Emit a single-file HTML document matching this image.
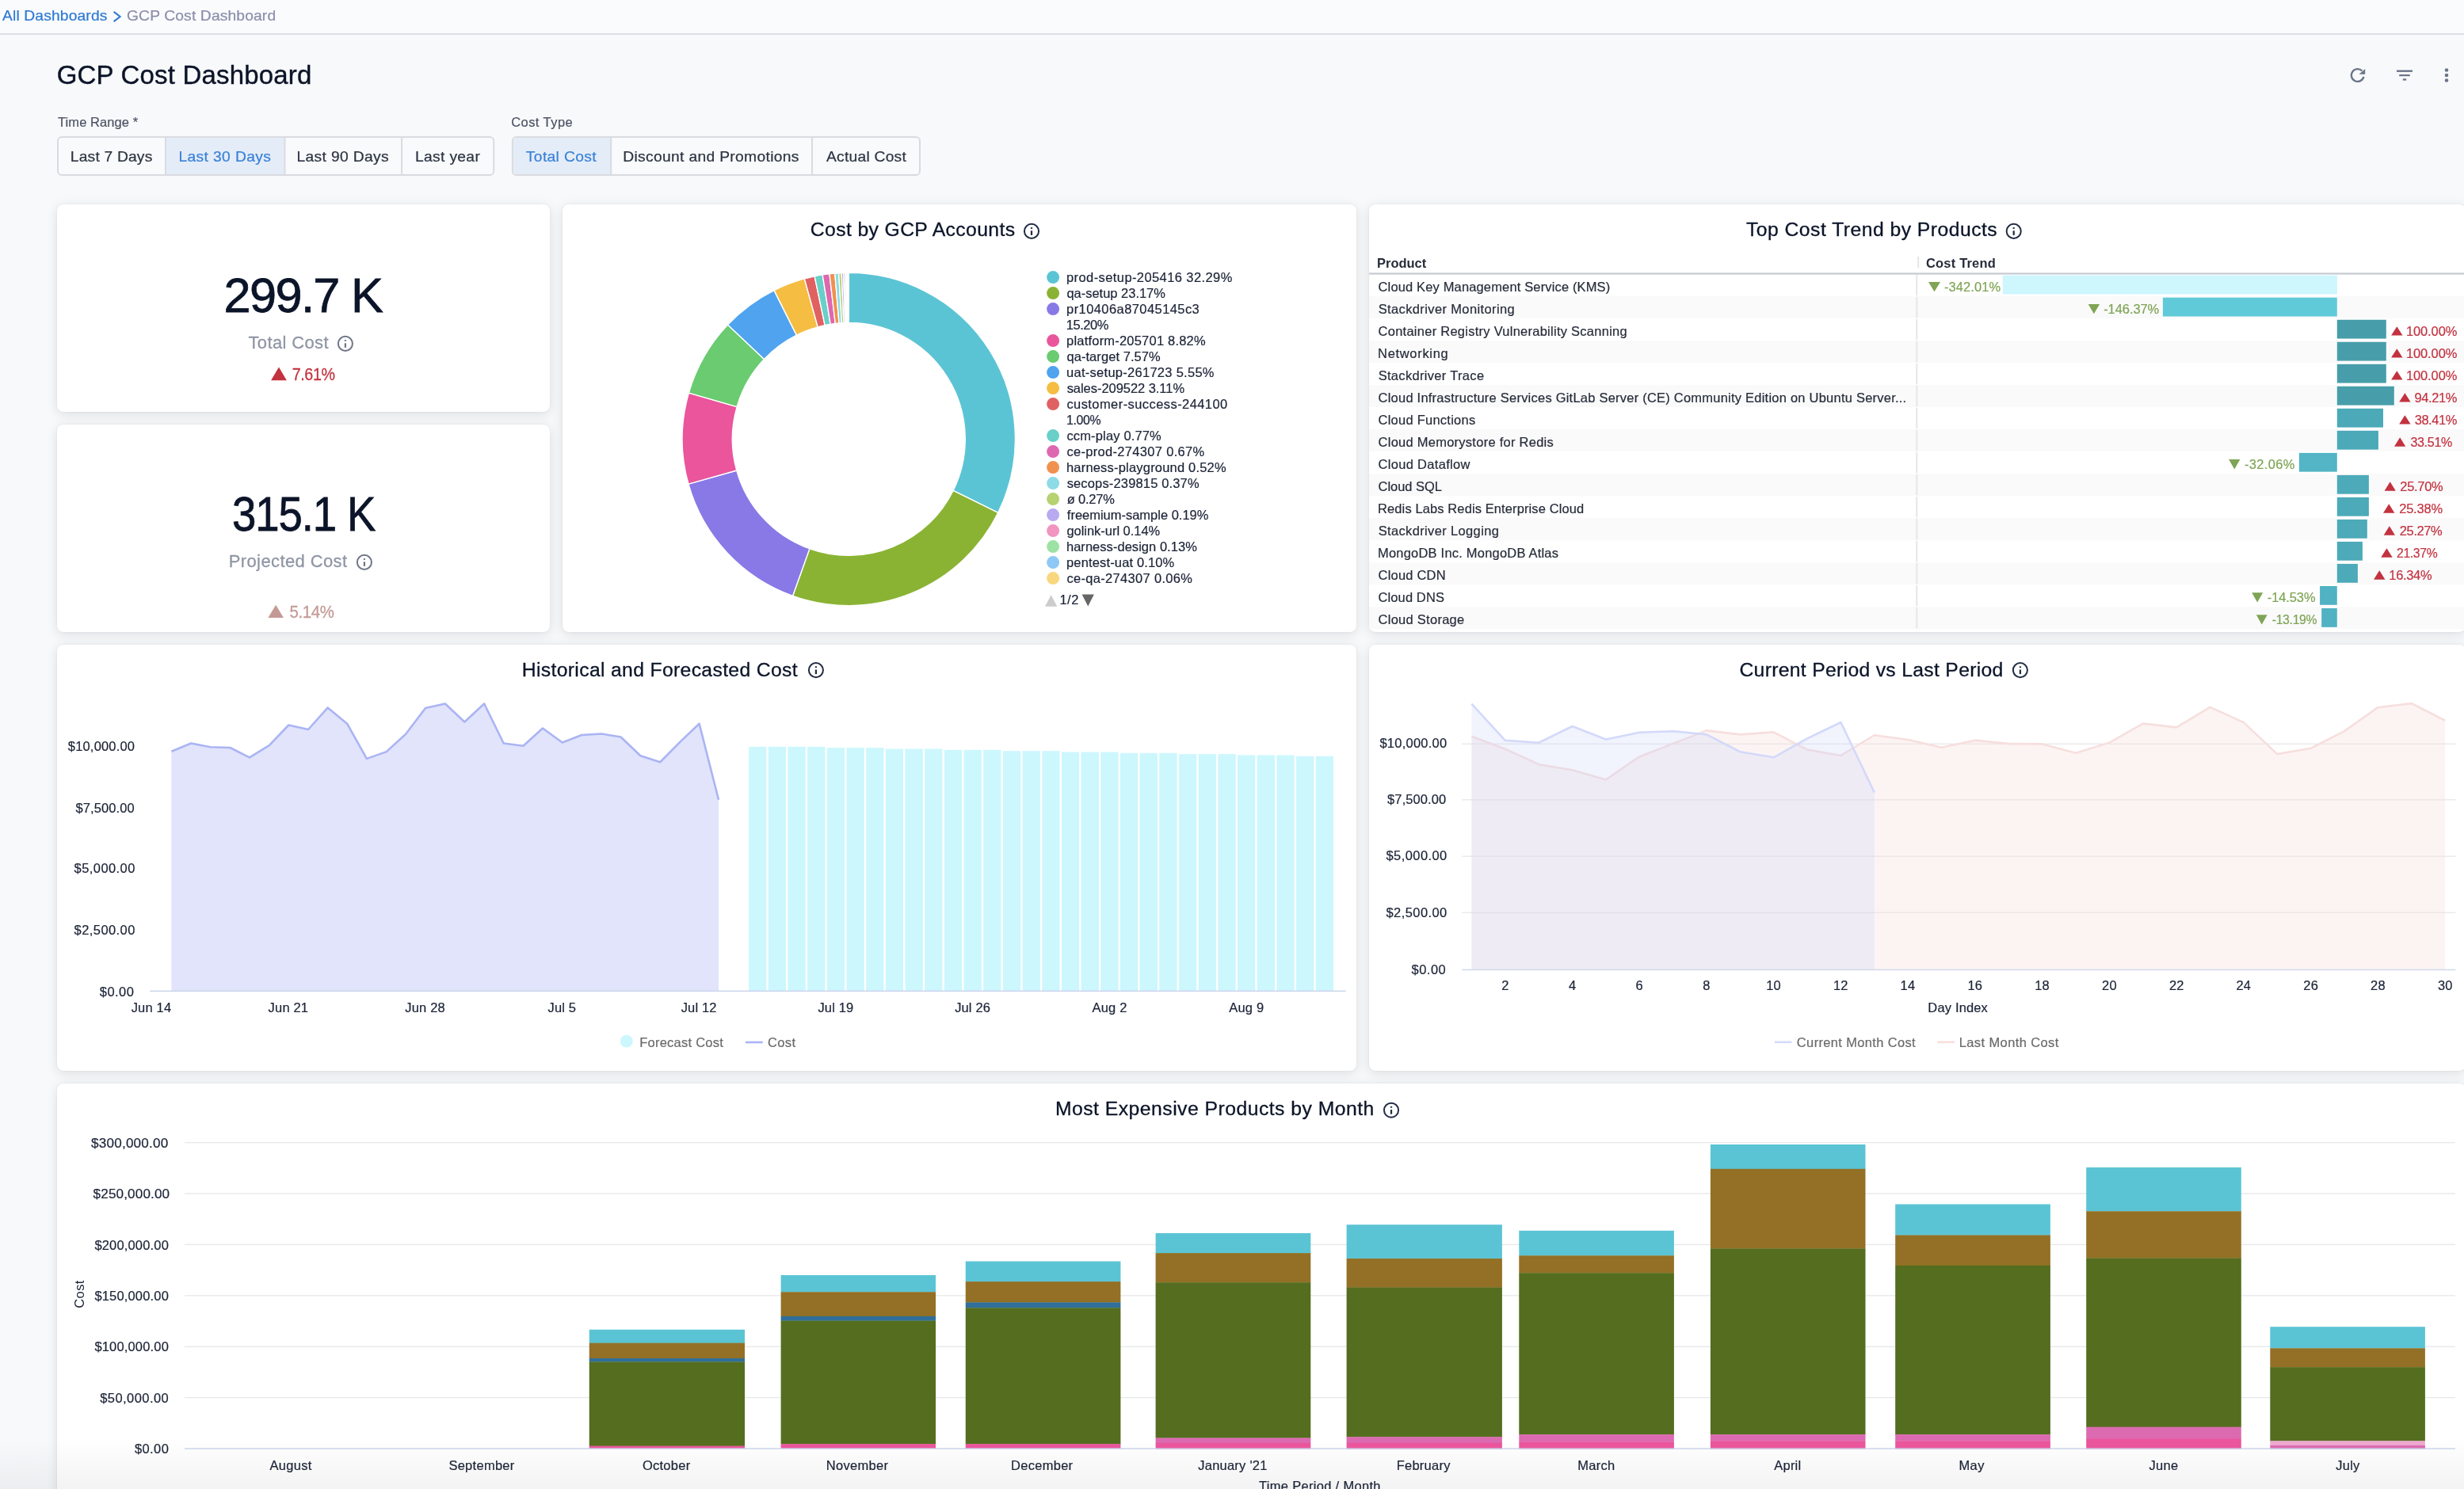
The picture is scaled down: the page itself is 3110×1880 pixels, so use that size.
<!DOCTYPE html><html lang="en"><head><meta charset="utf-8"><title>GCP Cost Dashboard</title><style>
html,body{margin:0;padding:0}body{width:3110px;height:1880px;overflow:hidden;background:#f8f9fb;position:relative;font-family:"Liberation Sans",sans-serif}
.card{position:absolute;background:#fff;border-radius:8px;box-shadow:0 3px 15px rgba(12,12,18,.115),0 0 2px rgba(12,12,18,.08)}
svg{position:absolute;left:0;top:0;will-change:transform}svg text{font-family:"Liberation Sans",sans-serif;white-space:pre}
.fade{position:absolute;left:0;top:1816px;width:3110px;height:64px;background:linear-gradient(to bottom,rgba(20,20,28,0),rgba(20,20,28,.052))}
</style></head><body>
<div class="card" style="left:72px;top:258px;width:622px;height:262px"></div>
<div class="card" style="left:72px;top:536px;width:622px;height:262px"></div>
<div class="card" style="left:710px;top:258px;width:1002px;height:540px"></div>
<div class="card" style="left:1728px;top:258px;width:1384px;height:540px"></div>
<div class="card" style="left:72px;top:814px;width:1640px;height:538.3px"></div>
<div class="card" style="left:1728px;top:814px;width:1384px;height:538.3px"></div>
<div class="card" style="left:72px;top:1368px;width:3040px;height:560px"></div>
<div class="fade"></div>
<svg width="3110" height="1880" viewBox="0 0 3110 1880">
<rect x="0" y="0" width="3110" height="42.2" fill="#fafbfd"/>
<text x="3.06" y="26.1" font-size="19.23" letter-spacing="0.15" fill="#2f7ad3" stroke="#2f7ad3" stroke-width="0.24">All Dashboards</text>
<path d="M143.6 14.8L151.6 21L143.6 27.2" fill="none" stroke="#2f7ad3" stroke-width="2.1"/>
<text x="160.03" y="26.1" font-size="19.23" letter-spacing="0.15" fill="#8b8fab" stroke="#8b8fab" stroke-width="0.24">GCP Cost Dashboard</text>
<rect x="0" y="42.15" width="3110" height="1.6" fill="#d5d6e3"/>
<text x="71.64" y="106" font-size="32.96" letter-spacing="0.21" fill="#0b1428" stroke="#0b1428" stroke-width="0.41">GCP Cost Dashboard</text>
<path d="M2981.3 89.4A7.9 7.9 0 1 0 2983.4 96.9" fill="none" stroke="#6b7489" stroke-width="2.3"/>
<path d="M2985.2 86.9L2985.2 93.8L2977.5 93.8Z" fill="#6b7489"/>
<rect x="3025" y="88.5" width="20" height="2.4" fill="#6b7489"/>
<rect x="3028.2" y="94" width="13.5" height="2.2" fill="#6b7489"/>
<rect x="3032.8" y="99.3" width="4.4" height="2.3" fill="#6b7489"/>
<circle cx="3088" cy="88.5" r="2.3" fill="#6b7489"/>
<circle cx="3088" cy="95" r="2.3" fill="#6b7489"/>
<circle cx="3088" cy="101.5" r="2.3" fill="#6b7489"/>
<text x="73.03" y="160.2" font-size="16.48" letter-spacing="0.1" fill="#4b5262" stroke="#4b5262" stroke-width="0.21">Time Range *</text>
<text x="645.16" y="160.2" font-size="16.48" letter-spacing="0.46" fill="#4b5262" stroke="#4b5262" stroke-width="0.21">Cost Type</text>
<rect x="73" y="172.9" width="550.2" height="48.1" rx="5" fill="#f9fafb" stroke="#d9dbe0" stroke-width="2"/>
<rect x="209" y="173.9" width="150.5" height="46.1" fill="#e4ecf7"/>
<rect x="208" y="173.9" width="2" height="46.1" fill="#d9dbe0"/>
<rect x="358.5" y="173.9" width="2" height="46.1" fill="#d9dbe0"/>
<rect x="506.1" y="173.9" width="2" height="46.1" fill="#d9dbe0"/>
<text x="88.82" y="203.8" font-size="19.23" letter-spacing="0.2" fill="#2c3442" stroke="#2c3442" stroke-width="0.24">Last 7 Days</text>
<text x="225.42" y="203.8" font-size="19.23" letter-spacing="0.39" fill="#3a82d8" stroke="#3a82d8" stroke-width="0.24">Last 30 Days</text>
<text x="374.42" y="203.8" font-size="19.23" letter-spacing="0.37" fill="#2c3442" stroke="#2c3442" stroke-width="0.24">Last 90 Days</text>
<text x="524.02" y="203.8" font-size="19.23" letter-spacing="0.34" fill="#2c3442" stroke="#2c3442" stroke-width="0.24">Last year</text>
<rect x="646.9" y="172.9" width="514.1" height="48.1" rx="5" fill="#f9fafb" stroke="#d9dbe0" stroke-width="2"/>
<path d="M652.9 173.9H771.2V220H652.9A5 5 0 0 1 647.9 215V178.9A5 5 0 0 1 652.9 173.9Z" fill="#e4ecf7"/>
<rect x="770.2" y="173.9" width="2" height="46.1" fill="#d9dbe0"/>
<rect x="1024" y="173.9" width="2" height="46.1" fill="#d9dbe0"/>
<text x="663.87" y="203.8" font-size="19.23" letter-spacing="0.36" fill="#3a82d8" stroke="#3a82d8" stroke-width="0.24">Total Cost</text>
<text x="786.22" y="203.8" font-size="19.23" letter-spacing="0.34" fill="#2c3442" stroke="#2c3442" stroke-width="0.24">Discount and Promotions</text>
<text x="1042.96" y="203.8" font-size="19.23" letter-spacing="0.26" fill="#2c3442" stroke="#2c3442" stroke-width="0.24">Actual Cost</text>
<text x="282.62" y="393.5" font-size="61.29" letter-spacing="-1.65" fill="#0b1428" stroke="#0b1428" stroke-width="0.77">299.7 K</text>
<text x="313.51" y="439.7" font-size="21.97" letter-spacing="0.37" fill="#8e95a4" stroke="#8e95a4" stroke-width="0.27">Total Cost</text>
<g fill="#6f7788"><circle cx="435.9" cy="433.9" r="9.05" fill="none" stroke="#6f7788" stroke-width="2"/><rect x="434.78" y="433.3" width="2.25" height="5.6"/><rect x="434.78" y="429.1" width="2.25" height="1.8"/></g>
<path d="M342.1 480.2L361.8 480.2L351.95 463.6Z" fill="#c2323f"/>
<text transform="translate(368.69 479.8) scale(0.8972 1)" font-size="21.97" letter-spacing="-0.44" fill="#c2323f" stroke="#c2323f" stroke-width="0.27">7.61%</text>
<text transform="translate(292.97 670.1) scale(0.8905 1)" font-size="61.29" letter-spacing="-1.23" fill="#0b1428" stroke="#0b1428" stroke-width="0.77">315.1 K</text>
<text x="288.7" y="715.5" font-size="21.97" letter-spacing="0.41" fill="#8e95a4" stroke="#8e95a4" stroke-width="0.27">Projected Cost</text>
<g fill="#6f7788"><circle cx="459.9" cy="709.9" r="9.05" fill="none" stroke="#6f7788" stroke-width="2"/><rect x="458.78" y="709.3" width="2.25" height="5.6"/><rect x="458.78" y="705.1" width="2.25" height="1.8"/></g>
<path d="M338.4 780L357.9 780L348.15 763.8Z" fill="#c49a96"/>
<text transform="translate(365.58 779.7) scale(0.9291 1)" font-size="21.97" letter-spacing="-0.44" fill="#c49a96" stroke="#c49a96" stroke-width="0.27">5.14%</text>
<text x="1022.84" y="297.5" font-size="24.72" letter-spacing="0.38" fill="#0b1428" stroke="#0b1428" stroke-width="0.31">Cost by GCP Accounts</text>
<g fill="#222d44"><circle cx="1302" cy="291.9" r="9.05" fill="none" stroke="#222d44" stroke-width="2"/><rect x="1300.88" y="291.3" width="2.25" height="5.6"/><rect x="1300.88" y="287.1" width="2.25" height="1.8"/></g>
<g stroke="#fff" stroke-width="1.4" stroke-linejoin="round"><path d="M1071.3 344.3A210.15 210.15 0 0 1 1259.79 647.38L1203.1 619.43A146.95 146.95 0 0 0 1071.3 407.5Z" fill="#5bc4d4"/><path d="M1259.79 647.38A210.15 210.15 0 0 1 1000.61 752.35L1021.87 692.84A146.95 146.95 0 0 0 1203.1 619.43Z" fill="#8ab334"/><path d="M1000.61 752.35A210.15 210.15 0 0 1 868.92 611.05L929.78 594.03A146.95 146.95 0 0 0 1021.87 692.84Z" fill="#8879e6"/><path d="M868.92 611.05A210.15 210.15 0 0 1 869.42 496.07L930.13 513.63A146.95 146.95 0 0 0 929.78 594.03Z" fill="#ea559c"/><path d="M869.42 496.07A210.15 210.15 0 0 1 918.56 410.11L964.49 453.52A146.95 146.95 0 0 0 930.13 513.63Z" fill="#6acb71"/><path d="M918.56 410.11A210.15 210.15 0 0 1 977.07 366.61L1005.41 423.1A146.95 146.95 0 0 0 964.49 453.52Z" fill="#4fa3ef"/><path d="M977.07 366.61A210.15 210.15 0 0 1 1015.34 351.89L1032.17 412.81A146.95 146.95 0 0 0 1005.41 423.1Z" fill="#f5bd42"/><path d="M1015.34 351.89A210.15 210.15 0 0 1 1028.17 348.77L1041.14 410.63A146.95 146.95 0 0 0 1032.17 412.81Z" fill="#e06162"/><path d="M1028.17 348.77A210.15 210.15 0 0 1 1038.16 346.93L1048.13 409.34A146.95 146.95 0 0 0 1041.14 410.63Z" fill="#68d0c8"/><path d="M1038.16 346.93A210.15 210.15 0 0 1 1046.93 345.72L1054.26 408.49A146.95 146.95 0 0 0 1048.13 409.34Z" fill="#de68b0"/><path d="M1046.93 345.72A210.15 210.15 0 0 1 1053.76 345.03L1059.03 408.01A146.95 146.95 0 0 0 1054.26 408.49Z" fill="#f09150"/><path d="M1053.76 345.03A210.15 210.15 0 0 1 1058.63 344.68L1062.44 407.77A146.95 146.95 0 0 0 1059.03 408.01Z" fill="#8cdbe6"/><path d="M1058.63 344.68A210.15 210.15 0 0 1 1062.19 344.5L1064.93 407.64A146.95 146.95 0 0 0 1062.44 407.77Z" fill="#b6d271"/><path d="M1062.19 344.5A210.15 210.15 0 0 1 1064.7 344.4L1066.68 407.57A146.95 146.95 0 0 0 1064.93 407.64Z" fill="#b7aaf0"/><path d="M1064.7 344.4A210.15 210.15 0 0 1 1066.55 344.35L1067.98 407.54A146.95 146.95 0 0 0 1066.68 407.57Z" fill="#f194c0"/><path d="M1066.55 344.35A210.15 210.15 0 0 1 1068.26 344.32L1069.18 407.52A146.95 146.95 0 0 0 1067.98 407.54Z" fill="#9de2a5"/><path d="M1068.26 344.32A210.15 210.15 0 0 1 1069.58 344.31L1070.1 407.5A146.95 146.95 0 0 0 1069.18 407.52Z" fill="#8ec8f6"/><path d="M1069.58 344.31A210.15 210.15 0 0 1 1070.38 344.3L1070.65 407.5A146.95 146.95 0 0 0 1070.1 407.5Z" fill="#f9d77e"/><path d="M1070.38 344.3A210.15 210.15 0 0 1 1070.9 344.3L1071.02 407.5A146.95 146.95 0 0 0 1070.65 407.5Z" fill="#f19a9b"/><path d="M1070.9 344.3A210.15 210.15 0 0 1 1071.3 344.3L1071.3 407.5A146.95 146.95 0 0 0 1071.02 407.5Z" fill="#a6e5df"/></g>
<circle cx="1329.1" cy="350.1" r="8" fill="#5bc4d4"/>
<text x="1346.04" y="356.2" font-size="16.48" letter-spacing="0.42" fill="#1b2336" stroke="#1b2336" stroke-width="0.21">prod-setup-205416 32.29%</text>
<circle cx="1329.1" cy="370.1" r="8" fill="#8ab334"/>
<text x="1346.41" y="376.2" font-size="16.48" letter-spacing="0" fill="#1b2336" stroke="#1b2336" stroke-width="0.21">qa-setup 23.17%</text>
<circle cx="1329.1" cy="390.1" r="8" fill="#8879e6"/>
<text x="1346.04" y="396.2" font-size="16.48" letter-spacing="0.44" fill="#1b2336" stroke="#1b2336" stroke-width="0.21">pr10406a87045145c3</text>
<text x="1345.84" y="416.2" font-size="16.48" letter-spacing="-0.45" fill="#1b2336" stroke="#1b2336" stroke-width="0.21">15.20%</text>
<circle cx="1329.1" cy="430.1" r="8" fill="#ea559c"/>
<text x="1346.04" y="436.2" font-size="16.48" letter-spacing="0.22" fill="#1b2336" stroke="#1b2336" stroke-width="0.21">platform-205701 8.82%</text>
<circle cx="1329.1" cy="450.1" r="8" fill="#6acb71"/>
<text x="1346.41" y="456.2" font-size="16.48" letter-spacing="0.08" fill="#1b2336" stroke="#1b2336" stroke-width="0.21">qa-target 7.57%</text>
<circle cx="1329.1" cy="470.1" r="8" fill="#4fa3ef"/>
<text x="1346.03" y="476.2" font-size="16.48" letter-spacing="0.29" fill="#1b2336" stroke="#1b2336" stroke-width="0.21">uat-setup-261723 5.55%</text>
<circle cx="1329.1" cy="490.1" r="8" fill="#f5bd42"/>
<text x="1346.64" y="496.2" font-size="16.48" letter-spacing="-0.03" fill="#1b2336" stroke="#1b2336" stroke-width="0.21">sales-209522 3.11%</text>
<circle cx="1329.1" cy="510.1" r="8" fill="#e06162"/>
<text x="1346.4" y="516.2" font-size="16.48" letter-spacing="0.44" fill="#1b2336" stroke="#1b2336" stroke-width="0.21">customer-success-244100</text>
<text transform="translate(1345.89 536.2) scale(0.9640 1)" font-size="16.48" letter-spacing="-0.33" fill="#1b2336" stroke="#1b2336" stroke-width="0.21">1.00%</text>
<circle cx="1329.1" cy="550.1" r="8" fill="#68d0c8"/>
<text x="1346.4" y="556.2" font-size="16.48" letter-spacing="0.17" fill="#1b2336" stroke="#1b2336" stroke-width="0.21">ccm-play 0.77%</text>
<circle cx="1329.1" cy="570.1" r="8" fill="#de68b0"/>
<text x="1346.4" y="576.2" font-size="16.48" letter-spacing="0.33" fill="#1b2336" stroke="#1b2336" stroke-width="0.21">ce-prod-274307 0.67%</text>
<circle cx="1329.1" cy="590.1" r="8" fill="#f09150"/>
<text x="1345.96" y="596.2" font-size="16.48" letter-spacing="0.21" fill="#1b2336" stroke="#1b2336" stroke-width="0.21">harness-playground 0.52%</text>
<circle cx="1329.1" cy="610.1" r="8" fill="#8cdbe6"/>
<text x="1346.64" y="616.2" font-size="16.48" letter-spacing="0.17" fill="#1b2336" stroke="#1b2336" stroke-width="0.21">secops-239815 0.37%</text>
<circle cx="1329.1" cy="630.1" r="8" fill="#b6d271"/>
<text x="1346.75" y="636.2" font-size="16.48" letter-spacing="-0.19" fill="#1b2336" stroke="#1b2336" stroke-width="0.21">ø 0.27%</text>
<circle cx="1329.1" cy="650.1" r="8" fill="#b7aaf0"/>
<text x="1346.87" y="656.2" font-size="16.48" letter-spacing="0" fill="#1b2336" stroke="#1b2336" stroke-width="0.21">freemium-sample 0.19%</text>
<circle cx="1329.1" cy="670.1" r="8" fill="#f194c0"/>
<text x="1346.41" y="676.2" font-size="16.48" letter-spacing="-0.02" fill="#1b2336" stroke="#1b2336" stroke-width="0.21">golink-url 0.14%</text>
<circle cx="1329.1" cy="690.1" r="8" fill="#9de2a5"/>
<text x="1345.96" y="696.2" font-size="16.48" letter-spacing="0.05" fill="#1b2336" stroke="#1b2336" stroke-width="0.21">harness-design 0.13%</text>
<circle cx="1329.1" cy="710.1" r="8" fill="#8ec8f6"/>
<text x="1346.04" y="716.2" font-size="16.48" letter-spacing="0.16" fill="#1b2336" stroke="#1b2336" stroke-width="0.21">pentest-uat 0.10%</text>
<circle cx="1329.1" cy="730.1" r="8" fill="#f9d77e"/>
<text x="1346.4" y="736.2" font-size="16.48" letter-spacing="0.33" fill="#1b2336" stroke="#1b2336" stroke-width="0.21">ce-qa-274307 0.06%</text>
<path d="M1319 765.7L1334.3 765.7L1326.65 751.2Z" fill="#cccccc"/>
<text x="1337.44" y="762.8" font-size="16.48" letter-spacing="0.49" fill="#1b2336" stroke="#1b2336" stroke-width="0.21">1/2</text>
<path d="M1365.6 750.4L1380.9 750.4L1373.25 765.4Z" fill="#666666"/>
<text x="2203.94" y="297.7" font-size="24.72" letter-spacing="0.47" fill="#0b1428" stroke="#0b1428" stroke-width="0.31">Top Cost Trend by Products</text>
<g fill="#222d44"><circle cx="2541.7" cy="291.9" r="9.05" fill="none" stroke="#222d44" stroke-width="2"/><rect x="2540.58" y="291.3" width="2.25" height="5.6"/><rect x="2540.58" y="287.1" width="2.25" height="1.8"/></g>
<text x="1738" y="338.3" font-size="16.48" letter-spacing="0.01" fill="#262c39" font-weight="700">Product</text>
<text x="2431.02" y="338.3" font-size="16.48" letter-spacing="0.19" fill="#262c39" font-weight="700">Cost Trend</text>
<rect x="2420.2" y="324" width="2" height="14" fill="#e3e5e9"/>
<rect x="2418.3" y="346.8" width="2" height="26.4" fill="#e4e6ea"/>
<text x="1739.56" y="367.7" font-size="16.48" letter-spacing="0.16" fill="#262c39" stroke="#262c39" stroke-width="0.21">Cloud Key Management Service (KMS)</text>
<rect x="2527.9" y="347.7" width="421.9" height="23.8" fill="#cdf6fd"/>
<path d="M2434 355.9L2449 355.9L2441.5 368.3Z" fill="#7fa455"/>
<text x="2453.97" y="367.7" font-size="16.48" letter-spacing="0.08" fill="#7fa455" stroke="#7fa455" stroke-width="0.21">-342.01%</text>
<rect x="1728" y="374.02" width="1400" height="28.02" fill="#fafafb"/>
<rect x="2418.3" y="374.82" width="2" height="26.4" fill="#e4e6ea"/>
<text x="1739.65" y="395.72" font-size="16.48" letter-spacing="0.39" fill="#262c39" stroke="#262c39" stroke-width="0.21">Stackdriver Monitoring</text>
<rect x="2729.9" y="375.72" width="219.9" height="23.8" fill="#61cad8"/>
<path d="M2635.7 383.92L2650.1 383.92L2642.9 396.32Z" fill="#7fa455"/>
<text x="2655.17" y="395.72" font-size="16.48" letter-spacing="-0.06" fill="#7fa455" stroke="#7fa455" stroke-width="0.21">-146.37%</text>
<rect x="2418.3" y="402.84" width="2" height="26.4" fill="#e4e6ea"/>
<text x="1739.56" y="423.74" font-size="16.48" letter-spacing="0.27" fill="#262c39" stroke="#262c39" stroke-width="0.21">Container Registry Vulnerability Scanning</text>
<rect x="2949.8" y="403.74" width="62" height="23.8" fill="#479eaa"/>
<path d="M3018.1 423.54L3032.5 423.54L3025.3 412.14Z" fill="#c2323f"/>
<text x="3036.94" y="423.74" font-size="16.48" letter-spacing="-0.1" fill="#c2323f" stroke="#c2323f" stroke-width="0.21">100.00%</text>
<rect x="1728" y="430.06" width="1400" height="28.02" fill="#fafafb"/>
<rect x="2418.3" y="430.86" width="2" height="26.4" fill="#e4e6ea"/>
<text x="1739.05" y="451.76" font-size="16.48" letter-spacing="0.7" fill="#262c39" stroke="#262c39" stroke-width="0.21">Networking</text>
<rect x="2949.8" y="431.76" width="62" height="23.8" fill="#479eaa"/>
<path d="M3018.1 451.56L3032.5 451.56L3025.3 440.16Z" fill="#c2323f"/>
<text x="3036.94" y="451.76" font-size="16.48" letter-spacing="-0.1" fill="#c2323f" stroke="#c2323f" stroke-width="0.21">100.00%</text>
<rect x="2418.3" y="458.88" width="2" height="26.4" fill="#e4e6ea"/>
<text x="1739.65" y="479.78" font-size="16.48" letter-spacing="0.33" fill="#262c39" stroke="#262c39" stroke-width="0.21">Stackdriver Trace</text>
<rect x="2949.8" y="459.78" width="62" height="23.8" fill="#479eaa"/>
<path d="M3018.1 479.58L3032.5 479.58L3025.3 468.18Z" fill="#c2323f"/>
<text x="3036.94" y="479.78" font-size="16.48" letter-spacing="-0.1" fill="#c2323f" stroke="#c2323f" stroke-width="0.21">100.00%</text>
<rect x="1728" y="486.1" width="1400" height="28.02" fill="#fafafb"/>
<rect x="2418.3" y="486.9" width="2" height="26.4" fill="#e4e6ea"/>
<text x="1739.56" y="507.8" font-size="16.48" letter-spacing="0.24" fill="#262c39" stroke="#262c39" stroke-width="0.21">Cloud Infrastructure Services GitLab Server (CE) Community Edition on Ubuntu Server...</text>
<rect x="2949.8" y="487.8" width="72" height="23.8" fill="#479eaa"/>
<path d="M3028.2 507.6L3042.6 507.6L3035.4 496.2Z" fill="#c2323f"/>
<text x="3047.53" y="507.8" font-size="16.48" letter-spacing="-0.41" fill="#c2323f" stroke="#c2323f" stroke-width="0.21">94.21%</text>
<rect x="2418.3" y="514.92" width="2" height="26.4" fill="#e4e6ea"/>
<text x="1739.56" y="535.82" font-size="16.48" letter-spacing="0.26" fill="#262c39" stroke="#262c39" stroke-width="0.21">Cloud Functions</text>
<rect x="2949.8" y="515.82" width="58.2" height="23.8" fill="#4ba9b8"/>
<path d="M3028.2 535.62L3042.6 535.62L3035.4 524.22Z" fill="#c2323f"/>
<text x="3047.67" y="535.82" font-size="16.48" letter-spacing="-0.44" fill="#c2323f" stroke="#c2323f" stroke-width="0.21">38.41%</text>
<rect x="1728" y="542.14" width="1400" height="28.02" fill="#fafafb"/>
<rect x="2418.3" y="542.94" width="2" height="26.4" fill="#e4e6ea"/>
<text x="1739.56" y="563.84" font-size="16.48" letter-spacing="0.27" fill="#262c39" stroke="#262c39" stroke-width="0.21">Cloud Memorystore for Redis</text>
<rect x="2949.8" y="543.84" width="52.1" height="23.8" fill="#4ba9b8"/>
<path d="M3022 563.64L3036.3 563.64L3029.15 552.24Z" fill="#c2323f"/>
<text transform="translate(3042.39 563.84) scale(0.9768 1)" font-size="16.48" letter-spacing="-0.33" fill="#c2323f" stroke="#c2323f" stroke-width="0.21">33.51%</text>
<rect x="2418.3" y="570.96" width="2" height="26.4" fill="#e4e6ea"/>
<text x="1739.56" y="591.86" font-size="16.48" letter-spacing="0.32" fill="#262c39" stroke="#262c39" stroke-width="0.21">Cloud Dataflow</text>
<rect x="2901.9" y="571.86" width="47.9" height="23.8" fill="#53b5c5"/>
<path d="M2813.2 580.06L2827.3 580.06L2820.25 592.46Z" fill="#7fa455"/>
<text x="2833.07" y="591.86" font-size="16.48" letter-spacing="0.32" fill="#7fa455" stroke="#7fa455" stroke-width="0.21">-32.06%</text>
<rect x="1728" y="598.18" width="1400" height="28.02" fill="#fafafb"/>
<rect x="2418.3" y="598.98" width="2" height="26.4" fill="#e4e6ea"/>
<text x="1739.56" y="619.88" font-size="16.48" letter-spacing="-0.03" fill="#262c39" stroke="#262c39" stroke-width="0.21">Cloud SQL</text>
<rect x="2949.8" y="599.88" width="40.1" height="23.8" fill="#4caab9"/>
<path d="M3009.6 619.68L3023.8 619.68L3016.7 608.28Z" fill="#c2323f"/>
<text x="3029.37" y="619.88" font-size="16.48" letter-spacing="-0.32" fill="#c2323f" stroke="#c2323f" stroke-width="0.21">25.70%</text>
<rect x="2418.3" y="627" width="2" height="26.4" fill="#e4e6ea"/>
<text x="1739.05" y="647.9" font-size="16.48" letter-spacing="0.12" fill="#262c39" stroke="#262c39" stroke-width="0.21">Redis Labs Redis Enterprise Cloud</text>
<rect x="2949.8" y="627.9" width="40.1" height="23.8" fill="#4caab9"/>
<path d="M3008 647.7L3022.4 647.7L3015.2 636.3Z" fill="#c2323f"/>
<text x="3028.17" y="647.9" font-size="16.48" letter-spacing="-0.18" fill="#c2323f" stroke="#c2323f" stroke-width="0.21">25.38%</text>
<rect x="1728" y="654.22" width="1400" height="28.02" fill="#fafafb"/>
<rect x="2418.3" y="655.02" width="2" height="26.4" fill="#e4e6ea"/>
<text x="1739.65" y="675.92" font-size="16.48" letter-spacing="0.37" fill="#262c39" stroke="#262c39" stroke-width="0.21">Stackdriver Logging</text>
<rect x="2949.8" y="655.92" width="38" height="23.8" fill="#4caab9"/>
<path d="M3008.7 675.72L3023 675.72L3015.85 664.32Z" fill="#c2323f"/>
<text x="3028.87" y="675.92" font-size="16.48" letter-spacing="-0.4" fill="#c2323f" stroke="#c2323f" stroke-width="0.21">25.27%</text>
<rect x="2418.3" y="683.04" width="2" height="26.4" fill="#e4e6ea"/>
<text x="1739.05" y="703.94" font-size="16.48" letter-spacing="0.22" fill="#262c39" stroke="#262c39" stroke-width="0.21">MongoDB Inc. MongoDB Atlas</text>
<rect x="2949.8" y="683.94" width="32.1" height="23.8" fill="#4caab9"/>
<path d="M3005.2 703.74L3019.7 703.74L3012.45 692.34Z" fill="#c2323f"/>
<text transform="translate(3025.01 703.94) scale(0.9521 1)" font-size="16.48" letter-spacing="-0.33" fill="#c2323f" stroke="#c2323f" stroke-width="0.21">21.37%</text>
<rect x="1728" y="710.26" width="1400" height="28.02" fill="#fafafb"/>
<rect x="2418.3" y="711.06" width="2" height="26.4" fill="#e4e6ea"/>
<text x="1739.56" y="731.96" font-size="16.48" letter-spacing="0.22" fill="#262c39" stroke="#262c39" stroke-width="0.21">Cloud CDN</text>
<rect x="2949.8" y="711.96" width="26.1" height="23.8" fill="#4caab9"/>
<path d="M2996 731.76L3010.5 731.76L3003.25 720.36Z" fill="#c2323f"/>
<text x="3015.34" y="731.96" font-size="16.48" letter-spacing="-0.33" fill="#c2323f" stroke="#c2323f" stroke-width="0.21">16.34%</text>
<rect x="2418.3" y="739.08" width="2" height="26.4" fill="#e4e6ea"/>
<text x="1739.56" y="759.98" font-size="16.48" letter-spacing="0.12" fill="#262c39" stroke="#262c39" stroke-width="0.21">Cloud DNS</text>
<rect x="2928.1" y="739.98" width="21.7" height="23.8" fill="#50b2c2"/>
<path d="M2842.2 748.18L2856.1 748.18L2849.15 760.58Z" fill="#7fa455"/>
<text x="2861.87" y="759.98" font-size="16.48" letter-spacing="-0.11" fill="#7fa455" stroke="#7fa455" stroke-width="0.21">-14.53%</text>
<rect x="1728" y="766.3" width="1400" height="28.02" fill="#fafafb"/>
<rect x="2418.3" y="767.1" width="2" height="26.4" fill="#e4e6ea"/>
<text x="1739.56" y="788" font-size="16.48" letter-spacing="0.28" fill="#262c39" stroke="#262c39" stroke-width="0.21">Cloud Storage</text>
<rect x="2930.2" y="768" width="19.6" height="23.8" fill="#50b2c2"/>
<path d="M2847.8 776.2L2861.7 776.2L2854.75 788.6Z" fill="#7fa455"/>
<text transform="translate(2867.7 788) scale(0.9589 1)" font-size="16.48" letter-spacing="-0.33" fill="#7fa455" stroke="#7fa455" stroke-width="0.21">-13.19%</text>
<rect x="1728" y="344.4" width="1400" height="2.2" fill="#c5cad1"/>
<text x="658.77" y="853.75" font-size="24.72" letter-spacing="0.34" fill="#0b1428" stroke="#0b1428" stroke-width="0.31">Historical and Forecasted Cost</text>
<g fill="#222d44"><circle cx="1029.9" cy="846.1" r="9.05" fill="none" stroke="#222d44" stroke-width="2"/><rect x="1028.78" y="845.5" width="2.25" height="5.6"/><rect x="1028.78" y="841.3" width="2.25" height="1.8"/></g>
<path d="M216.33 948.76L241.17 938.53L265.64 943.28L290.48 944.01L314.95 956.43L339.79 941.09L364.26 915.52L389.1 921L413.57 893.6L438.41 914.06L462.88 957.89L487.72 949.12L512.19 926.84L537.03 893.97L561.86 888.49L586.34 911.5L611.17 888.49L635.64 938.53L660.48 941.82L684.95 919.54L709.79 937.43L734.26 927.94L759.1 926.48L783.57 930.49L808.41 954.24L833.25 962.27L857.72 937.43L882.56 913.69L907.03 1009.76L907.03 1251.3L216.33 1251.3Z" fill="#e1e4fb"/>
<path d="M216.33 948.76L241.17 938.53L265.64 943.28L290.48 944.01L314.95 956.43L339.79 941.09L364.26 915.52L389.1 921L413.57 893.6L438.41 914.06L462.88 957.89L487.72 949.12L512.19 926.84L537.03 893.97L561.86 888.49L586.34 911.5L611.17 888.49L635.64 938.53L660.48 941.82L684.95 919.54L709.79 937.43L734.26 927.94L759.1 926.48L783.57 930.49L808.41 954.24L833.25 962.27L857.72 937.43L882.56 913.69L907.03 1009.76" fill="none" stroke="#aab4f3" stroke-width="2.6" stroke-linejoin="round"/>
<rect x="945.05" y="942.8" width="22.3" height="308.5" fill="#ccf7fd"/>
<rect x="969.73" y="942.8" width="22.3" height="308.5" fill="#ccf7fd"/>
<rect x="994.41" y="942.8" width="22.3" height="308.5" fill="#ccf7fd"/>
<rect x="1019.09" y="942.8" width="22.3" height="308.5" fill="#ccf7fd"/>
<rect x="1043.77" y="944.13" width="22.3" height="307.17" fill="#ccf7fd"/>
<rect x="1068.45" y="944.13" width="22.3" height="307.17" fill="#ccf7fd"/>
<rect x="1093.13" y="944.13" width="22.3" height="307.17" fill="#ccf7fd"/>
<rect x="1117.81" y="945.46" width="22.3" height="305.84" fill="#ccf7fd"/>
<rect x="1142.49" y="945.46" width="22.3" height="305.84" fill="#ccf7fd"/>
<rect x="1167.17" y="945.46" width="22.3" height="305.84" fill="#ccf7fd"/>
<rect x="1191.85" y="946.79" width="22.3" height="304.51" fill="#ccf7fd"/>
<rect x="1216.53" y="946.79" width="22.3" height="304.51" fill="#ccf7fd"/>
<rect x="1241.21" y="946.79" width="22.3" height="304.51" fill="#ccf7fd"/>
<rect x="1265.89" y="948.12" width="22.3" height="303.18" fill="#ccf7fd"/>
<rect x="1290.57" y="948.12" width="22.3" height="303.18" fill="#ccf7fd"/>
<rect x="1315.25" y="948.12" width="22.3" height="303.18" fill="#ccf7fd"/>
<rect x="1339.93" y="949.45" width="22.3" height="301.85" fill="#ccf7fd"/>
<rect x="1364.61" y="949.45" width="22.3" height="301.85" fill="#ccf7fd"/>
<rect x="1389.29" y="949.45" width="22.3" height="301.85" fill="#ccf7fd"/>
<rect x="1413.97" y="950.78" width="22.3" height="300.52" fill="#ccf7fd"/>
<rect x="1438.65" y="950.78" width="22.3" height="300.52" fill="#ccf7fd"/>
<rect x="1463.33" y="950.78" width="22.3" height="300.52" fill="#ccf7fd"/>
<rect x="1488.01" y="952.11" width="22.3" height="299.19" fill="#ccf7fd"/>
<rect x="1512.69" y="952.11" width="22.3" height="299.19" fill="#ccf7fd"/>
<rect x="1537.37" y="952.11" width="22.3" height="299.19" fill="#ccf7fd"/>
<rect x="1562.05" y="953.44" width="22.3" height="297.86" fill="#ccf7fd"/>
<rect x="1586.73" y="953.44" width="22.3" height="297.86" fill="#ccf7fd"/>
<rect x="1611.41" y="953.44" width="22.3" height="297.86" fill="#ccf7fd"/>
<rect x="1636.09" y="954.77" width="22.3" height="296.53" fill="#ccf7fd"/>
<rect x="1660.77" y="954.77" width="22.3" height="296.53" fill="#ccf7fd"/>
<rect x="189.2" y="1250.6" width="1509.5" height="1.5" fill="#cbd4eb"/>
<text x="85.82" y="948.2" font-size="16.48" letter-spacing="0.19" fill="#1b2336" stroke="#1b2336" stroke-width="0.21">$10,000.00</text>
<text x="95.52" y="1025.7" font-size="16.48" letter-spacing="0.1" fill="#1b2336" stroke="#1b2336" stroke-width="0.21">$7,500.00</text>
<text x="93.62" y="1102.1" font-size="16.48" letter-spacing="0.43" fill="#1b2336" stroke="#1b2336" stroke-width="0.21">$5,000.00</text>
<text x="93.62" y="1179.6" font-size="16.48" letter-spacing="0.43" fill="#1b2336" stroke="#1b2336" stroke-width="0.21">$2,500.00</text>
<text x="125.82" y="1257.9" font-size="16.48" letter-spacing="0.47" fill="#1b2336" stroke="#1b2336" stroke-width="0.21">$0.00</text>
<text x="165.7" y="1278.2" font-size="16.48" letter-spacing="0.19" fill="#1b2336" stroke="#1b2336" stroke-width="0.21">Jun 14</text>
<text x="338.61" y="1278.2" font-size="16.48" letter-spacing="0.19" fill="#1b2336" stroke="#1b2336" stroke-width="0.21">Jun 21</text>
<text x="511.32" y="1278.2" font-size="16.48" letter-spacing="0.19" fill="#1b2336" stroke="#1b2336" stroke-width="0.21">Jun 28</text>
<text x="691.53" y="1278.2" font-size="16.48" letter-spacing="0.16" fill="#1b2336" stroke="#1b2336" stroke-width="0.21">Jul 5</text>
<text x="859.68" y="1278.2" font-size="16.48" letter-spacing="0.17" fill="#1b2336" stroke="#1b2336" stroke-width="0.21">Jul 12</text>
<text x="1032.41" y="1278.2" font-size="16.48" letter-spacing="0.17" fill="#1b2336" stroke="#1b2336" stroke-width="0.21">Jul 19</text>
<text x="1205.13" y="1278.2" font-size="16.48" letter-spacing="0.17" fill="#1b2336" stroke="#1b2336" stroke-width="0.21">Jul 26</text>
<text x="1378.5" y="1278.2" font-size="16.48" letter-spacing="0.2" fill="#1b2336" stroke="#1b2336" stroke-width="0.21">Aug 2</text>
<text x="1551.23" y="1278.2" font-size="16.48" letter-spacing="0.21" fill="#1b2336" stroke="#1b2336" stroke-width="0.21">Aug 9</text>
<circle cx="790.8" cy="1314.7" r="7.9" fill="#ccf7fd"/>
<text x="807.25" y="1321.6" font-size="16.48" letter-spacing="0.25" fill="#6b6b6b" stroke="#6b6b6b" stroke-width="0.21">Forecast Cost</text>
<rect x="941" y="1314.7" width="21.7" height="2.6" fill="#aab4f5"/>
<text x="969.06" y="1321.6" font-size="16.48" letter-spacing="0.36" fill="#6b6b6b" stroke="#6b6b6b" stroke-width="0.21">Cost</text>
<text x="2195.44" y="853.75" font-size="24.72" letter-spacing="0.31" fill="#0b1428" stroke="#0b1428" stroke-width="0.31">Current Period vs Last Period</text>
<g fill="#222d44"><circle cx="2549.9" cy="846.1" r="9.05" fill="none" stroke="#222d44" stroke-width="2"/><rect x="2548.78" y="845.5" width="2.25" height="5.6"/><rect x="2548.78" y="841.3" width="2.25" height="1.8"/></g>
<rect x="1845.3" y="938.6" width="1254" height="1.4" fill="#e8e9eb"/>
<rect x="1845.3" y="1009.1" width="1254" height="1.4" fill="#e8e9eb"/>
<rect x="1845.3" y="1080.5" width="1254" height="1.4" fill="#e8e9eb"/>
<rect x="1845.3" y="1151.6" width="1254" height="1.4" fill="#e8e9eb"/>
<path d="M1857.4 929.73L1899.77 945.69L1942.14 965.19L1984.51 972.28L2026.88 984.4L2069.25 955.44L2111.62 938.89L2153.99 922.35L2196.36 927.37L2238.73 924.42L2281.1 946.58L2323.47 953.96L2365.84 928.26L2408.21 934.07L2450.58 943.84L2492.95 934.66L2535.32 939.1L2577.69 939.4L2620.06 950.66L2662.43 937.62L2704.8 913.62L2747.17 918.37L2789.54 892.89L2831.91 912.14L2874.28 952.14L2916.65 944.73L2959.02 923.11L3001.39 893.18L3043.76 888.15L3086.13 909.77L3086.13 1224.2L1857.4 1224.2Z" fill="#f7dcd9" fill-opacity="0.32"/>
<path d="M1857.4 929.73L1899.77 945.69L1942.14 965.19L1984.51 972.28L2026.88 984.4L2069.25 955.44L2111.62 938.89L2153.99 922.35L2196.36 927.37L2238.73 924.42L2281.1 946.58L2323.47 953.96L2365.84 928.26L2408.21 934.07L2450.58 943.84L2492.95 934.66L2535.32 939.1L2577.69 939.4L2620.06 950.66L2662.43 937.62L2704.8 913.62L2747.17 918.37L2789.54 892.89L2831.91 912.14L2874.28 952.14L2916.65 944.73L2959.02 923.11L3001.39 893.18L3043.76 888.15L3086.13 909.77" fill="none" stroke="#f6dfdd" stroke-width="2.6" stroke-linejoin="round"/>
<path d="M1857.4 888.66L1899.77 934.76L1942.14 937.71L1984.51 917.03L2026.88 933.58L2069.25 924.71L2111.62 923.23L2153.99 927.37L2196.36 949.24L2238.73 956.33L2281.1 932.39L2323.47 912L2365.84 1000.65L2365.84 1224.2L1857.4 1224.2Z" fill="#c9cff8" fill-opacity="0.26"/>
<path d="M1857.4 888.66L1899.77 934.76L1942.14 937.71L1984.51 917.03L2026.88 933.58L2069.25 924.71L2111.62 923.23L2153.99 927.37L2196.36 949.24L2238.73 956.33L2281.1 932.39L2323.47 912L2365.84 1000.65" fill="none" stroke="#d3d9fa" stroke-width="2.6" stroke-linejoin="round"/>
<rect x="1845.3" y="1223.7" width="1254" height="1.4" fill="#cdd6ec"/>
<text x="1741.42" y="943.6" font-size="16.48" letter-spacing="0.26" fill="#1b2336" stroke="#1b2336" stroke-width="0.21">$10,000.00</text>
<text x="1751.12" y="1015.2" font-size="16.48" letter-spacing="0.1" fill="#1b2336" stroke="#1b2336" stroke-width="0.21">$7,500.00</text>
<text x="1749.52" y="1085.5" font-size="16.48" letter-spacing="0.43" fill="#1b2336" stroke="#1b2336" stroke-width="0.21">$5,000.00</text>
<text x="1749.52" y="1157.7" font-size="16.48" letter-spacing="0.43" fill="#1b2336" stroke="#1b2336" stroke-width="0.21">$2,500.00</text>
<text x="1781.62" y="1229.9" font-size="16.48" letter-spacing="0.47" fill="#1b2336" stroke="#1b2336" stroke-width="0.21">$0.00</text>
<text x="1895.15" y="1250.1" font-size="16.48" letter-spacing="0" fill="#1b2336" stroke="#1b2336" stroke-width="0.21">2</text>
<text x="1979.94" y="1250.1" font-size="16.48" letter-spacing="0" fill="#1b2336" stroke="#1b2336" stroke-width="0.21">4</text>
<text x="2064.57" y="1250.1" font-size="16.48" letter-spacing="0" fill="#1b2336" stroke="#1b2336" stroke-width="0.21">6</text>
<text x="2149.37" y="1250.1" font-size="16.48" letter-spacing="0" fill="#1b2336" stroke="#1b2336" stroke-width="0.21">8</text>
<text x="2229.18" y="1250.1" font-size="16.48" letter-spacing="0.16" fill="#1b2336" stroke="#1b2336" stroke-width="0.21">10</text>
<text x="2314.01" y="1250.1" font-size="16.48" letter-spacing="0.16" fill="#1b2336" stroke="#1b2336" stroke-width="0.21">12</text>
<text x="2398.58" y="1250.1" font-size="16.48" letter-spacing="0.16" fill="#1b2336" stroke="#1b2336" stroke-width="0.21">14</text>
<text x="2483.44" y="1250.1" font-size="16.48" letter-spacing="0.16" fill="#1b2336" stroke="#1b2336" stroke-width="0.21">16</text>
<text x="2568.18" y="1250.1" font-size="16.48" letter-spacing="0.16" fill="#1b2336" stroke="#1b2336" stroke-width="0.21">18</text>
<text x="2653.09" y="1250.1" font-size="16.48" letter-spacing="0.16" fill="#1b2336" stroke="#1b2336" stroke-width="0.21">20</text>
<text x="2737.92" y="1250.1" font-size="16.48" letter-spacing="0.16" fill="#1b2336" stroke="#1b2336" stroke-width="0.21">22</text>
<text x="2822.49" y="1250.1" font-size="16.48" letter-spacing="0.17" fill="#1b2336" stroke="#1b2336" stroke-width="0.21">24</text>
<text x="2907.35" y="1250.1" font-size="16.48" letter-spacing="0.16" fill="#1b2336" stroke="#1b2336" stroke-width="0.21">26</text>
<text x="2992.09" y="1250.1" font-size="16.48" letter-spacing="0.16" fill="#1b2336" stroke="#1b2336" stroke-width="0.21">28</text>
<text x="3076.89" y="1250.1" font-size="16.48" letter-spacing="0.17" fill="#1b2336" stroke="#1b2336" stroke-width="0.21">30</text>
<text x="2433.35" y="1277.8" font-size="16.48" letter-spacing="0.17" fill="#1b2336" stroke="#1b2336" stroke-width="0.21">Day Index</text>
<rect x="2240" y="1314.5" width="21.4" height="2.6" fill="#d5dafa"/>
<text x="2267.86" y="1321.7" font-size="16.48" letter-spacing="0.36" fill="#6b6b6b" stroke="#6b6b6b" stroke-width="0.21">Current Month Cost</text>
<rect x="2445.3" y="1314.5" width="21.5" height="2.6" fill="#f7dfdc"/>
<text x="2472.75" y="1321.7" font-size="16.48" letter-spacing="0.4" fill="#6b6b6b" stroke="#6b6b6b" stroke-width="0.21">Last Month Cost</text>
<text x="1331.97" y="1408.2" font-size="24.72" letter-spacing="0.48" fill="#0b1428" stroke="#0b1428" stroke-width="0.31">Most Expensive Products by Month</text>
<g fill="#222d44"><circle cx="1756" cy="1401.7" r="9.05" fill="none" stroke="#222d44" stroke-width="2"/><rect x="1754.88" y="1401.1" width="2.25" height="5.6"/><rect x="1754.88" y="1396.9" width="2.25" height="1.8"/></g>
<rect x="233" y="1763.9" width="2866" height="1.4" fill="#e8e9eb"/>
<rect x="233" y="1699.5" width="2866" height="1.4" fill="#e8e9eb"/>
<rect x="233" y="1635.1" width="2866" height="1.4" fill="#e8e9eb"/>
<rect x="233" y="1570.7" width="2866" height="1.4" fill="#e8e9eb"/>
<rect x="233" y="1506.3" width="2866" height="1.4" fill="#e8e9eb"/>
<rect x="233" y="1441.9" width="2866" height="1.4" fill="#e8e9eb"/>
<text x="170.02" y="1835.2" font-size="16.48" letter-spacing="0.39" fill="#1b2336" stroke="#1b2336" stroke-width="0.21">$0.00</text>
<text x="126.22" y="1770.8" font-size="16.48" letter-spacing="0.46" fill="#1b2336" stroke="#1b2336" stroke-width="0.21">$50,000.00</text>
<text x="119.43" y="1706.4" font-size="16.48" letter-spacing="0.18" fill="#1b2336" stroke="#1b2336" stroke-width="0.21">$100,000.00</text>
<text x="119.43" y="1642" font-size="16.48" letter-spacing="0.18" fill="#1b2336" stroke="#1b2336" stroke-width="0.21">$150,000.00</text>
<text x="119.43" y="1577.6" font-size="16.48" letter-spacing="0.18" fill="#1b2336" stroke="#1b2336" stroke-width="0.21">$200,000.00</text>
<text x="117.62" y="1513.2" font-size="17.1" letter-spacing="0.14" fill="#1b2336" stroke="#1b2336" stroke-width="0.21">$250,000.00</text>
<text x="115.12" y="1448.8" font-size="17.1" letter-spacing="0.2" fill="#1b2336" stroke="#1b2336" stroke-width="0.21">$300,000.00</text>
<text transform="translate(106.4 1634) rotate(-90)" text-anchor="middle" font-size="16.5" letter-spacing="0.4" fill="#1b2336">Cost</text>
<rect x="743.75" y="1678.75" width="196.25" height="17.18" fill="#5bc4d4"/>
<rect x="743.75" y="1695.62" width="196.25" height="19.68" fill="#937025"/>
<rect x="743.75" y="1715" width="196.25" height="4.67" fill="#2f6f99"/>
<rect x="743.75" y="1719.38" width="196.25" height="106.55" fill="#546d1f"/>
<rect x="743.75" y="1825.62" width="196.25" height="3.42" fill="#ea559c"/>
<rect x="985.6" y="1610" width="195.4" height="21.55" fill="#5bc4d4"/>
<rect x="985.6" y="1631.25" width="195.4" height="30.93" fill="#937025"/>
<rect x="985.6" y="1661.88" width="195.4" height="5.92" fill="#2f6f99"/>
<rect x="985.6" y="1667.5" width="195.4" height="155.93" fill="#546d1f"/>
<rect x="985.6" y="1823.12" width="195.4" height="5.92" fill="#ea559c"/>
<rect x="1218.75" y="1592.5" width="195.65" height="25.93" fill="#5bc4d4"/>
<rect x="1218.75" y="1618.12" width="195.65" height="26.55" fill="#937025"/>
<rect x="1218.75" y="1644.38" width="195.65" height="7.17" fill="#2f6f99"/>
<rect x="1218.75" y="1651.25" width="195.65" height="172.18" fill="#546d1f"/>
<rect x="1218.75" y="1823.12" width="195.65" height="5.92" fill="#ea559c"/>
<rect x="1458.6" y="1556.96" width="195.7" height="25.46" fill="#5bc4d4"/>
<rect x="1458.6" y="1582.12" width="195.7" height="37.41" fill="#937025"/>
<rect x="1458.6" y="1619.23" width="195.7" height="196.56" fill="#546d1f"/>
<rect x="1458.6" y="1815.5" width="195.7" height="6.59" fill="#dc6ab0"/>
<rect x="1458.6" y="1821.79" width="195.7" height="7.85" fill="#ea559c"/>
<rect x="1699.6" y="1546.26" width="196.3" height="43.08" fill="#5bc4d4"/>
<rect x="1699.6" y="1589.04" width="196.3" height="36.78" fill="#937025"/>
<rect x="1699.6" y="1625.52" width="196.3" height="189.01" fill="#546d1f"/>
<rect x="1699.6" y="1814.24" width="196.3" height="7.85" fill="#dc6ab0"/>
<rect x="1699.6" y="1821.79" width="196.3" height="7.85" fill="#ea559c"/>
<rect x="1917.3" y="1553.81" width="195.6" height="31.75" fill="#5bc4d4"/>
<rect x="1917.3" y="1585.26" width="195.6" height="22.32" fill="#937025"/>
<rect x="1917.3" y="1607.28" width="195.6" height="204.11" fill="#546d1f"/>
<rect x="1917.3" y="1811.09" width="195.6" height="9.74" fill="#dc6ab0"/>
<rect x="1917.3" y="1820.53" width="195.6" height="9.11" fill="#ea559c"/>
<rect x="2158.9" y="1444.99" width="195.6" height="31.12" fill="#5bc4d4"/>
<rect x="2158.9" y="1475.81" width="195.6" height="100.95" fill="#937025"/>
<rect x="2158.9" y="1576.46" width="195.6" height="234.94" fill="#546d1f"/>
<rect x="2158.9" y="1811.09" width="195.6" height="8.48" fill="#dc6ab0"/>
<rect x="2158.9" y="1819.27" width="195.6" height="10.36" fill="#ea559c"/>
<rect x="2392.2" y="1520.47" width="195.7" height="39.3" fill="#5bc4d4"/>
<rect x="2392.2" y="1559.47" width="195.7" height="38.67" fill="#937025"/>
<rect x="2392.2" y="1597.85" width="195.7" height="213.55" fill="#546d1f"/>
<rect x="2392.2" y="1811.09" width="195.7" height="8.48" fill="#dc6ab0"/>
<rect x="2392.2" y="1819.27" width="195.7" height="10.36" fill="#ea559c"/>
<rect x="2633.2" y="1473.92" width="195.6" height="55.66" fill="#5bc4d4"/>
<rect x="2633.2" y="1529.28" width="195.6" height="59.43" fill="#937025"/>
<rect x="2633.2" y="1588.41" width="195.6" height="213.55" fill="#546d1f"/>
<rect x="2633.2" y="1801.66" width="195.6" height="15.4" fill="#dc6ab0"/>
<rect x="2633.2" y="1816.75" width="195.6" height="12.88" fill="#ea559c"/>
<rect x="2865.3" y="1675.22" width="195.6" height="27.35" fill="#5bc4d4"/>
<rect x="2865.3" y="1702.27" width="195.6" height="24.2" fill="#937025"/>
<rect x="2865.3" y="1726.17" width="195.6" height="93.4" fill="#546d1f"/>
<rect x="2865.3" y="1819.27" width="195.6" height="5.96" fill="#eea9cf"/>
<rect x="2865.3" y="1824.93" width="195.6" height="4.7" fill="#dc6ab0"/>
<rect x="233" y="1828.3" width="2866" height="1.5" fill="#cbd4eb"/>
<text x="340.55" y="1855.6" font-size="16.48" letter-spacing="0.3" fill="#1b2336" stroke="#1b2336" stroke-width="0.21">August</text>
<text x="566.4" y="1855.6" font-size="16.48" letter-spacing="0.29" fill="#1b2336" stroke="#1b2336" stroke-width="0.21">September</text>
<text x="810.9" y="1855.6" font-size="16.48" letter-spacing="0.28" fill="#1b2336" stroke="#1b2336" stroke-width="0.21">October</text>
<text x="1042.87" y="1855.6" font-size="16.48" letter-spacing="0.31" fill="#1b2336" stroke="#1b2336" stroke-width="0.21">November</text>
<text x="1275.97" y="1855.6" font-size="16.48" letter-spacing="0.31" fill="#1b2336" stroke="#1b2336" stroke-width="0.21">December</text>
<text x="1512.31" y="1855.6" font-size="16.48" letter-spacing="0.24" fill="#1b2336" stroke="#1b2336" stroke-width="0.21">January &#x27;21</text>
<text x="1762.63" y="1855.6" font-size="16.48" letter-spacing="0.27" fill="#1b2336" stroke="#1b2336" stroke-width="0.21">February</text>
<text x="1991.13" y="1855.6" font-size="16.48" letter-spacing="0.32" fill="#1b2336" stroke="#1b2336" stroke-width="0.21">March</text>
<text x="2239.29" y="1855.6" font-size="16.48" letter-spacing="0.23" fill="#1b2336" stroke="#1b2336" stroke-width="0.21">April</text>
<text x="2472.44" y="1855.6" font-size="16.48" letter-spacing="0.43" fill="#1b2336" stroke="#1b2336" stroke-width="0.21">May</text>
<text x="2712.56" y="1855.6" font-size="16.48" letter-spacing="0.34" fill="#1b2336" stroke="#1b2336" stroke-width="0.21">June</text>
<text x="2948.21" y="1855.6" font-size="16.48" letter-spacing="0.28" fill="#1b2336" stroke="#1b2336" stroke-width="0.21">July</text>
<text x="1588.93" y="1881.7" font-size="16.48" letter-spacing="0.33" fill="#1b2336" stroke="#1b2336" stroke-width="0.21">Time Period / Month</text>
</svg></body></html>
